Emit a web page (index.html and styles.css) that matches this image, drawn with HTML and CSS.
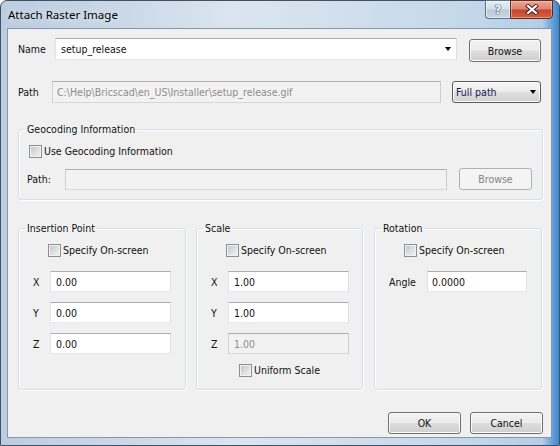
FILE: index.html
```html
<!DOCTYPE html>
<html>
<head>
<meta charset="utf-8">
<link rel="stylesheet" href="styles.css">
</head>
<body>
<div class="window">
  <div class="titlebar">
    <span class="title">Attach Raster Image</span>
    <div class="caption-btns">
      <div class="cap help"><span>?</span></div>
      <div class="cap close">
        <svg width="14" height="11" viewBox="0 0 14 11">
          <path d="M3 2 L11 9 M11 2 L3 9" stroke="#3a2420" stroke-width="4" stroke-linecap="square" fill="none"/>
          <path d="M3 2 L11 9 M11 2 L3 9" stroke="#ffffff" stroke-width="2.2" stroke-linecap="square" fill="none"/>
        </svg>
      </div>
    </div>
  </div>
  <div class="client">
    <div class="row row-name">
      <span class="lbl lbl-name">Name</span>
      <div class="edit combo-edit"><span class="val">setup_release</span><span class="arrow"></span></div>
      <button class="btn btn-browse">Browse</button>
    </div>
    <div class="row row-path">
      <span class="lbl lbl-path">Path</span>
      <div class="edit disabled path-edit">C:\Help\Bricscad\en_US\Installer\setup_release.gif</div>
      <div class="combo-btn"><span class="val">Full path</span><span class="arrow"></span></div>
    </div>
    <fieldset class="group geo">
      <legend>Geocoding Information</legend>
      <label class="chk chk-geo"><span class="box"></span>Use Geocoding Information</label>
      <div class="row geo-path">
        <span class="lbl lbl-geopath">Path:</span>
        <div class="edit disabled geo-edit"></div>
        <button class="btn disabled btn-geo">Browse</button>
      </div>
    </fieldset>
    <div class="groups">
      <fieldset class="group g-ins">
        <legend>Insertion Point</legend>
        <label class="chk chk-spec"><span class="box"></span>Specify On-screen</label>
        <div class="coord first"><span class="lbl lbl-axis">X</span><div class="edit num">0.00</div></div>
        <div class="coord"><span class="lbl lbl-axis">Y</span><div class="edit num">0.00</div></div>
        <div class="coord"><span class="lbl lbl-axis">Z</span><div class="edit num">0.00</div></div>
      </fieldset>
      <fieldset class="group g-scale">
        <legend>Scale</legend>
        <label class="chk chk-spec"><span class="box"></span>Specify On-screen</label>
        <div class="coord first"><span class="lbl lbl-axis">X</span><div class="edit num">1.00</div></div>
        <div class="coord"><span class="lbl lbl-axis">Y</span><div class="edit num">1.00</div></div>
        <div class="coord"><span class="lbl lbl-axis">Z</span><div class="edit num disabled">1.00</div></div>
        <label class="chk chk-uniform"><span class="box"></span>Uniform Scale</label>
      </fieldset>
      <fieldset class="group g-rot">
        <legend>Rotation</legend>
        <label class="chk chk-spec"><span class="box"></span>Specify On-screen</label>
        <div class="coord first"><span class="lbl lbl-angle">Angle</span><div class="edit num angle">0.0000</div></div>
      </fieldset>
    </div>
    <div class="footer">
      <button class="btn btn-foot">OK</button>
      <button class="btn btn-foot">Cancel</button>
    </div>
  </div>
</div>
</body>
</html>
```

FILE: styles.css
```css
html, body {
  margin: 0;
  padding: 0;
}
body {
  width: 560px;
  height: 446px;
  overflow: hidden;
  font-family: "DejaVu Sans Condensed", "DejaVu Sans", sans-serif;
  font-stretch: condensed;
  font-size: 10.5px;
  color: #111;
  background: #fff;
}
.window {
  box-sizing: border-box;
  width: 560px;
  height: 446px;
  border: 1px solid #3e5166;
  border-radius: 7px 7px 0 0;
  background: linear-gradient(to right, #bccde0 0%, #c9d7e6 20%, #dae5ef 42%, #d2dfec 60%, #c3d7ea 85%, #b4cde6 97%, #6ea5dc 98.6%, #3f86cc 100%);
  padding: 0 7px 7px 6px;
  display: flex;
  flex-direction: column;
}
.titlebar {
  height: 27px;
  display: flex;
  align-items: flex-start;
  padding-left: 1px;
}
.title {
  font-family: "Noto Sans", "Open Sans", sans-serif;
  font-stretch: normal;
  font-size: 11.5px;
  line-height: 27px;
  color: #000;
  text-shadow: 0 0 6px rgba(255,255,255,0.8);
}
.caption-btns {
  margin-left: auto;
  margin-top: -1px;
  margin-right: -1px;
  display: flex;
}
.cap {
  box-sizing: border-box;
  height: 19px;
  display: flex;
  align-items: center;
  justify-content: center;
}
.help {
  width: 25px;
  border: 1px solid #5d7086;
  border-right: none;
  border-radius: 0 0 0 4px;
  background: linear-gradient(#e6edf4 0%, #d3dfea 45%, #bccbdb 55%, #c6d6e6 100%);
  box-shadow: inset 0 0 0 1px rgba(255,255,255,0.55);
}
.help span {
  font-family: "DejaVu Sans", sans-serif;
  font-stretch: normal;
  font-weight: bold;
  font-size: 12px;
  color: #fff;
  text-shadow: 0 0 1px #2b3a4a, 0 0 1px #2b3a4a, 0 0 1px #2b3a4a;
  line-height: 1;
}
.close {
  width: 43px;
  border: 1px solid #5e2a1f;
  border-radius: 0 0 4px 0;
  background: linear-gradient(#eaa795 0%, #dc8571 45%, #c8462f 55%, #d4623f 100%);
  box-shadow: inset 0 0 0 1px rgba(255,220,200,0.45);
}
.close svg { display: block; }

.client {
  flex: 1;
  background: #f0f0f0;
  border: 1px solid #8398ad;
  padding: 0 8px 0 10px;
  display: flex;
  flex-direction: column;
}
.row {
  display: flex;
  align-items: flex-start;
}
.lbl {
  display: flex;
  align-items: center;
  flex: none;
}
.edit {
  box-sizing: border-box;
  height: 21px;
  background: #fff;
  border: 1px solid;
  border-color: #abadb3 #dbdfe6 #e3e9ef #e2e3ea;
  display: flex;
  align-items: center;
  padding-left: 4px;
  flex: none;
  white-space: nowrap;
  overflow: hidden;
}
.edit.disabled {
  background: #f2f2f2;
  border-color: #afafaf #cdcdcd #d8d8d8 #d0d0d0;
  color: #8d8d8d;
}
.btn {
  box-sizing: border-box;
  height: 22px;
  border: 1px solid #707070;
  border-radius: 3px;
  background: linear-gradient(#f2f2f2 0%, #ebebeb 48%, #dddddd 52%, #cfcfcf 100%);
  box-shadow: inset 0 0 0 1px #fbfbfb;
  font: inherit;
  color: #111;
  padding: 0;
  flex: none;
}
.btn.disabled {
  border-color: #adb2b5;
  background: #f4f4f4;
  box-shadow: none;
  color: #838383;
}
.arrow {
  width: 0;
  height: 0;
  border-left: 3.5px solid transparent;
  border-right: 3.5px solid transparent;
  border-top: 4px solid #000;
  margin-left: auto;
  flex: none;
}

/* row 1 */
.row-name { margin-top: 9px; }
.lbl-name { width: 37px; height: 22px; }
.combo-edit { width: 402px; height: 22px; padding-left: 5px; padding-right: 5px; }
.btn-browse { width: 72px; height: 23px; margin-left: 12px; margin-top: 1px; }

/* row 2 */
.row-path { margin-top: 19px; }
.lbl-path { width: 34px; height: 22px; }
.path-edit { width: 389px; height: 22px; padding-left: 4px; }
.combo-btn {
  box-sizing: border-box;
  width: 89px;
  height: 22px;
  margin-left: 11px;
  border: 1px solid #5b5b5b;
  border-radius: 3px;
  background: linear-gradient(#f5f5f5 0%, #ececec 48%, #dfdfdf 52%, #d2d2d2 100%);
  box-shadow: inset 0 0 0 1px #fbfbfb;
  display: flex;
  align-items: center;
  padding: 0 4px 0 3px;
  color: #141450;
}

/* group boxes */
.group {
  margin: 0;
  padding: 0;
  min-width: 0;
  border: 1px solid #d5dfe5;
  border-radius: 3px;
  box-shadow: inset 1px 1px 0 #fff, 1px 1px 0 #fff;
}
.group legend {
  padding: 0 2px;
  margin-left: 6px;
  line-height: 14px;
}
.chk {
  display: flex;
  align-items: center;
  height: 13px;
  line-height: 13px;
  white-space: nowrap;
}
.box {
  box-sizing: border-box;
  width: 13px;
  height: 13px;
  border: 1px solid #8e8f8f;
  background: linear-gradient(135deg, #bfc3c8 0%, #dcdee0 50%, #f4f4f4 100%);
  box-shadow: inset 0 0 0 1px #f2f2f2;
  margin-right: 2px;
  flex: none;
}

.geo { margin-top: 19px; }
.chk-geo { margin-top: 9px; margin-left: 10px; }
.geo-path { margin-top: 10px; margin-left: 8px; margin-bottom: 9px; }
.lbl-geopath { width: 38px; height: 22px; }
.geo-edit { width: 382px; margin-top: 1px; }
.btn-geo { width: 73px; margin-left: 12px; }

.groups {
  display: flex;
  margin-top: 21px;
}
.g-ins { width: 168px; box-sizing: border-box; }
.g-scale { width: 167px; box-sizing: border-box; margin-left: 10px; }
.g-rot { width: 168px; box-sizing: border-box; margin-left: 11px; }
.chk-spec { margin-top: 9px; margin-left: 29px; }
.coord {
  display: flex;
  margin-top: 10px;
  margin-left: 14px;
}
.coord.first { margin-top: 14px; }
.lbl-axis { width: 17px; height: 21px; }
.lbl-angle { width: 38px; height: 21px; }
.num { width: 121px; padding-left: 5px; }
.num.angle { width: 100px; padding-left: 4px; }
.chk-uniform { margin-top: 10px; margin-left: 42px; margin-bottom: 12px; }

.footer {
  display: flex;
  justify-content: flex-end;
  margin-top: 22px;
  margin-right: 0px;
}
.btn-foot { width: 73px; margin-left: 9px; }
```
